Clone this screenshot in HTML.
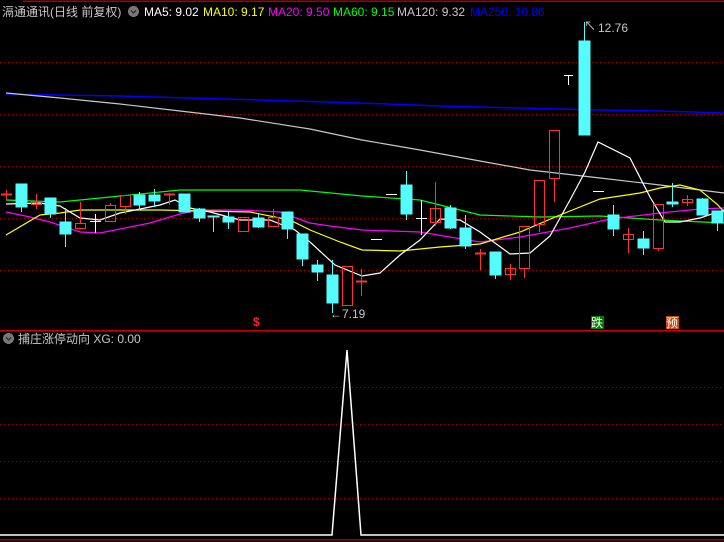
<!DOCTYPE html><html><head><meta charset="utf-8"><style>
html,body{margin:0;padding:0;background:#000;width:724px;height:542px;overflow:hidden}
svg{display:block}
text{font-family:"Liberation Sans","Noto Sans CJK SC",sans-serif;font-size:12px}
</style></head><body>
<svg width="724" height="542" viewBox="0 0 724 542" xmlns="http://www.w3.org/2000/svg" shape-rendering="crispEdges">
<rect width="724" height="542" fill="#000"/>
<line x1="23" y1="1" x2="724" y2="1" stroke="#a00" stroke-width="1.5"/>
<g stroke="#a00" stroke-dasharray="1,3">
<line x1="0" y1="62.5" x2="724" y2="62.5"/><line x1="0" y1="114.5" x2="724" y2="114.5"/>
<line x1="0" y1="166.5" x2="724" y2="166.5"/><line x1="0" y1="218.5" x2="724" y2="218.5"/>
<line x1="0" y1="270.5" x2="724" y2="270.5"/>
<line x1="0" y1="387.5" x2="724" y2="387.5"/><line x1="0" y1="424.5" x2="724" y2="424.5"/>
<line x1="0" y1="461.5" x2="724" y2="461.5"/><line x1="0" y1="498.5" x2="724" y2="498.5"/>
</g>
<line x1="0" y1="330.5" x2="724" y2="330.5" stroke="#c00" stroke-width="1.5"/>
<line x1="0" y1="539.5" x2="724" y2="539.5" stroke="#a00" stroke-width="1.5"/>
<g fill="none" shape-rendering="auto" stroke-width="1.2">
<polyline stroke="#0000ff" stroke-width="1.5" points="6,94 60,95 120,96 190,98 260,100 360,103 440,106 520,108 600,110 660,111 724,113"/>
<polyline stroke="#c8c8c8" points="6,93 60,98 120,104 180,111 240,118 310,129 362,140 420,150 480,161 530,170 600,178 660,185 724,193"/>
<polyline stroke="#00ff00" points="6,200 60,202 120,196 180,190 300,190 362,196 420,200 480,215 540,217 600,216 660,220 724,223"/>
<polyline stroke="#ff00ff" points="6,212 30,217 50,222 80,232 100,233 120,229 150,223 180,214 200,210 240,210 280,212 310,223 330,226 362,230 420,232 480,242 520,237 570,228 610,219 660,213 700,209 724,208"/>
<polyline stroke="#ffff00" points="6,235 40,215 60,213 80,210 130,210 160,210 250,212 290,220 310,230 340,242 362,250 400,251 440,247 480,244 520,232 560,215 600,199 640,193 660,188 680,185 700,190 718,205 724,212"/>
<polyline stroke="#ffffff" points="6,204 40,203 60,206 80,218 100,220 120,213 160,205 175,200 190,208 210,212 240,220 270,220 295,230 310,242 335,265 362,276 380,273 400,255 420,240 440,219 460,220 480,232 510,254 530,253 550,236 570,200 585,172 598,142 630,158 650,197 665,222 680,222 700,218 724,210"/>
</g>
<g fill="#54fcfc" stroke="#54fcfc">
<line x1="21.5" y1="184" x2="21.5" y2="212"/><rect x="16" y="184" width="11" height="23"/>
<line x1="50.5" y1="198" x2="50.5" y2="218"/><rect x="45" y="198" width="11" height="16"/>
<line x1="65.5" y1="208" x2="65.5" y2="247"/><rect x="60" y="222" width="11" height="12"/>
<line x1="139.5" y1="192" x2="139.5" y2="210"/><rect x="134" y="195" width="11" height="10"/>
<line x1="154.5" y1="189" x2="154.5" y2="207"/><rect x="149" y="195" width="11" height="6"/>
<rect x="179" y="194" width="11" height="18"/>
<line x1="199.5" y1="208" x2="199.5" y2="222"/><rect x="194" y="209" width="11" height="9"/>
<line x1="213.5" y1="217" x2="213.5" y2="232"/><rect x="208" y="216" width="11" height="1"/>
<line x1="228.5" y1="212" x2="228.5" y2="229"/><rect x="223" y="217" width="11" height="5"/>
<line x1="258.5" y1="213" x2="258.5" y2="228"/><rect x="253" y="218" width="11" height="9"/>
<line x1="287.5" y1="212" x2="287.5" y2="239"/><rect x="282" y="212" width="11" height="17"/>
<line x1="302.5" y1="234" x2="302.5" y2="266"/><rect x="297" y="234" width="11" height="25"/>
<line x1="317.5" y1="260" x2="317.5" y2="281"/><rect x="312" y="265" width="11" height="7"/>
<line x1="332.5" y1="260" x2="332.5" y2="313"/><rect x="327" y="275" width="11" height="28"/>
<line x1="406.5" y1="171" x2="406.5" y2="220"/><rect x="401" y="185" width="11" height="29"/>
<line x1="450.5" y1="205" x2="450.5" y2="229"/><rect x="445" y="208" width="11" height="20"/>
<line x1="465.5" y1="215" x2="465.5" y2="249"/><rect x="460" y="228" width="11" height="18"/>
<line x1="495.5" y1="252" x2="495.5" y2="279"/><rect x="490" y="252" width="11" height="23"/>
<line x1="584.5" y1="22" x2="584.5" y2="135"/><rect x="579" y="41" width="11" height="94"/>
<line x1="613.5" y1="205" x2="613.5" y2="236"/><rect x="608" y="215" width="11" height="14"/>
<line x1="643.5" y1="231" x2="643.5" y2="255"/><rect x="638" y="239" width="11" height="9"/>
<line x1="672.5" y1="183" x2="672.5" y2="207"/><rect x="667" y="202" width="11" height="2"/>
<line x1="702.5" y1="198" x2="702.5" y2="215"/><rect x="697" y="199" width="11" height="16"/>
<line x1="717.5" y1="211" x2="717.5" y2="231"/><rect x="712" y="211" width="11" height="12"/>
</g>
<g fill="none" stroke="#ff3232">
<line x1="6.5" y1="190" x2="6.5" y2="200"/><line x1="1" y1="194.5" x2="12" y2="194.5" stroke-width="2"/>
<line x1="36.5" y1="194" x2="36.5" y2="209"/><rect x="31.5" y="201.5" width="10" height="3"/>
<line x1="80.5" y1="202" x2="80.5" y2="223"/><rect x="75.5" y="223.5" width="10" height="5"/>
<line x1="110.5" y1="203" x2="110.5" y2="205"/><rect x="105.5" y="205.5" width="10" height="16"/>
<line x1="125.5" y1="206" x2="125.5" y2="214"/><rect x="120.5" y="195.5" width="10" height="11"/>
<line x1="169.5" y1="193" x2="169.5" y2="205"/><line x1="164" y1="194.5" x2="175" y2="194.5" stroke-width="2"/>
<rect x="238.5" y="217.5" width="10" height="14"/>
<line x1="273.5" y1="209" x2="273.5" y2="217"/><rect x="268.5" y="217.5" width="10" height="9"/>
<rect x="342.5" y="266.5" width="10" height="39"/>
<line x1="361.5" y1="269" x2="361.5" y2="296"/><line x1="356" y1="281.5" x2="367" y2="281.5" stroke-width="2"/>
<line x1="435.5" y1="182" x2="435.5" y2="226"/><rect x="430.5" y="208.5" width="10" height="14"/>
<line x1="480.5" y1="249" x2="480.5" y2="270"/><line x1="475" y1="253.5" x2="486" y2="253.5" stroke-width="2"/>
<line x1="510.5" y1="264" x2="510.5" y2="280"/><rect x="505.5" y="268.5" width="10" height="6"/>
<line x1="524.5" y1="268" x2="524.5" y2="278"/><rect x="519.5" y="226.5" width="10" height="42"/>
<line x1="539.5" y1="224" x2="539.5" y2="232"/><rect x="534.5" y="180.5" width="10" height="44"/>
<line x1="554.5" y1="178" x2="554.5" y2="202"/><rect x="549.5" y="130.5" width="10" height="48"/>
<line x1="628.5" y1="228" x2="628.5" y2="253"/><rect x="623.5" y="234.5" width="10" height="5"/>
<line x1="658.5" y1="248" x2="658.5" y2="251"/><rect x="653.5" y="204.5" width="10" height="44"/>
<line x1="687.5" y1="195" x2="687.5" y2="206"/><rect x="682.5" y="199.5" width="10" height="3"/>
</g>
<g stroke="#fff" fill="none">
<line x1="95.5" y1="214" x2="95.5" y2="233"/><line x1="90" y1="221.5" x2="101" y2="221.5"/>
<line x1="371" y1="239.5" x2="382" y2="239.5"/><line x1="386" y1="194.5" x2="397" y2="194.5"/>
<line x1="421.5" y1="200" x2="421.5" y2="235"/><line x1="416" y1="218.5" x2="427" y2="218.5"/>
<line x1="564" y1="75.5" x2="573" y2="75.5"/><line x1="568.5" y1="75" x2="568.5" y2="85"/>
<line x1="593" y1="191.5" x2="604" y2="191.5"/>
</g>
<polyline shape-rendering="auto" fill="none" stroke="#fff" stroke-width="1.5" points="0,535 332,535 347,350 361,535 724,535"/>
<text x="598" y="32" fill="#c8c8c8">12.76</text>
<text x="584" y="30" fill="#c8c8c8" font-size="9">↖</text>
<text x="330" y="318" fill="#c8c8c8">←7.19</text>
<text x="253" y="326" fill="#ff2020" font-size="11" font-weight="bold">$</text>
<rect x="591" y="316" width="13" height="13" fill="#007a00"/><text x="591" y="327" fill="#fff" font-size="12">跌</text>
<rect x="666" y="316" width="13" height="13" fill="#c84a10"/><text x="666" y="327" fill="#fff" font-size="12">预</text>
<text x="2" y="16" fill="#c8c8c8">滆通通讯(日线 前复权)</text>
<circle cx="133.5" cy="11.5" r="5.5" fill="#777"/><path d="M131 10.5l2.5 2.5 2.5-2.5" stroke="#222" fill="none" stroke-width="1.3"/>
<text x="144" y="16" fill="#fff">MA5: 9.02</text>
<text x="203" y="16" fill="#ffff00">MA10: 9.17</text>
<text x="268" y="16" fill="#ff00ff">MA20: 9.50</text>
<text x="333" y="16" fill="#00ff00">MA60: 9.15</text>
<text x="397" y="16" fill="#c8c8c8">MA120: 9.32</text>
<text x="470" y="16" fill="#0000ff">MA250: 10.86</text>
<circle cx="8.5" cy="338.5" r="5.5" fill="#777"/><path d="M6 337.5l2.5 2.5 2.5-2.5" stroke="#222" fill="none" stroke-width="1.3"/>
<text x="18" y="343" fill="#c8c8c8">捕庄涨停动向 XG: 0.00</text>
</svg></body></html>
